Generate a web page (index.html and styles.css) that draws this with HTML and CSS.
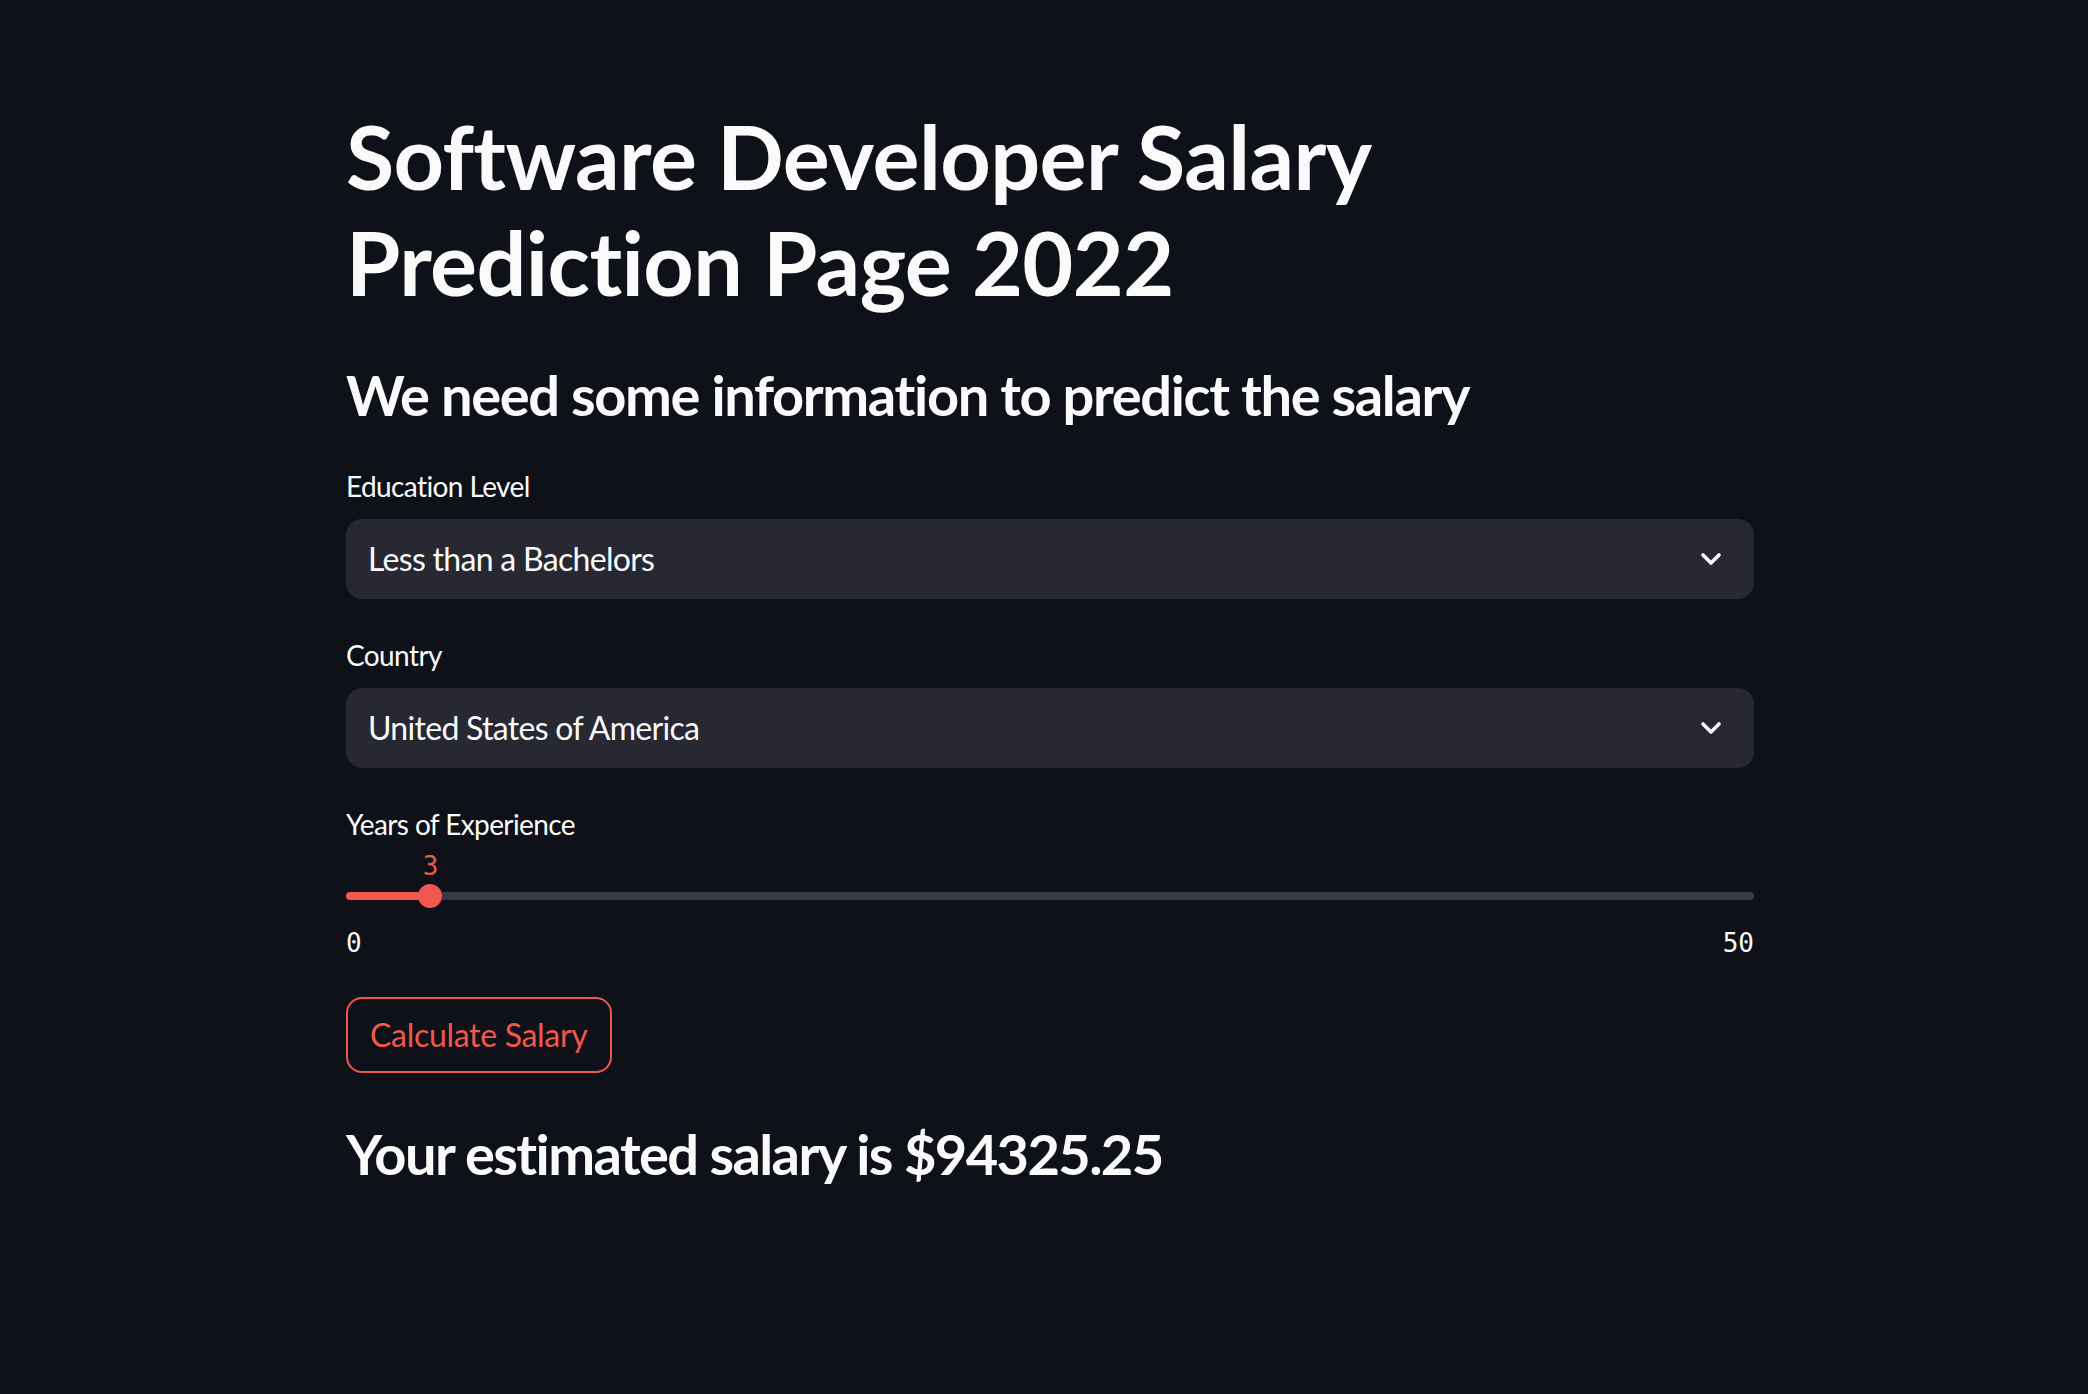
FILE: index.html
```html
<!DOCTYPE html>
<html lang="en">
<head>
<meta charset="utf-8">
<title>Software Developer Salary Prediction</title>
<link rel="stylesheet" href="styles.css">
</head>
<body>
<main class="page">
  <div class="content">
    <h1 class="title">Software Developer Salary<br>Prediction Page 2022</h1>
    <h3 class="subheader">We need some information to predict the salary</h3>

    <div class="field">
      <label class="label">Education Level</label>
      <div class="select">
        <span class="select-value">Less than a Bachelors</span>
        <svg class="chevron" width="22" height="14" viewBox="0 0 22 14"><polyline points="3,3 11,11 19,3" fill="none" stroke="#fafafa" stroke-width="3.6" stroke-linecap="round" stroke-linejoin="round"/></svg>
      </div>
    </div>

    <div class="field">
      <label class="label">Country</label>
      <div class="select">
        <span class="select-value">United States of America</span>
        <svg class="chevron" width="22" height="14" viewBox="0 0 22 14"><polyline points="3,3 11,11 19,3" fill="none" stroke="#fafafa" stroke-width="3.6" stroke-linecap="round" stroke-linejoin="round"/></svg>
      </div>
    </div>

    <div class="field slider-field">
      <label class="label">Years of Experience</label>
      <div class="slider">
        <div class="track">
          <div class="fill" style="width: 6%"></div>
          <div class="thumb" style="left: 6%">
            <span class="thumb-value">3</span>
          </div>
        </div>
        <div class="minmax">
          <span>0</span>
          <span>50</span>
        </div>
      </div>
    </div>

    <button class="btn">Calculate Salary</button>

    <h3 class="result">Your estimated salary is $94325.25</h3>
  </div>
</main>
</body>
</html>
```

FILE: styles.css
```css
* { box-sizing: border-box; }

html, body {
  margin: 0;
  padding: 0;
  background: #0e1117;
  color: #fafafa;
  font-family: "Lato", "Noto Sans", sans-serif;
  font-variant-ligatures: none;
}

body { min-height: 1394px; }

.page {
  padding: 103px 0 0 346px;
}

.content {
  width: 1408px;
}

.title {
  margin: 0;
  font-size: 88px;
  line-height: 106px;
  font-weight: 700;
  letter-spacing: -0.6px;
}

.subheader {
  margin: 46px 0 0;
  font-size: 56px;
  line-height: 68px;
  font-weight: 700;
  letter-spacing: -1.35px;
}

.field {
  margin-top: 39px;
}

.field + .field {
  margin-top: 38px;
}

.label {
  display: block;
  font-size: 28px;
  line-height: 36px;
  margin-bottom: 15px;
  letter-spacing: -0.6px;
}

.select {
  height: 80px;
  background: #272832;
  border-radius: 16px;
  display: flex;
  align-items: center;
  justify-content: space-between;
  padding: 0 32px 0 22px;
}

.select-value {
  font-size: 32px;
  line-height: 40px;
  letter-spacing: -0.7px;
}

.chevron { display: block; }

.slider {
  padding-top: 35px;
}

.track {
  position: relative;
  height: 8px;
  border-radius: 4px;
  background: #393b44;
}

.fill {
  height: 100%;
  border-radius: 4px;
  background: #f0574f;
}

.thumb {
  position: absolute;
  top: 50%;
  width: 24px;
  height: 24px;
  margin: -12px 0 0 -12px;
  border-radius: 50%;
  background: #f0574f;
}

.thumb-value {
  position: absolute;
  left: 50%;
  bottom: 27px;
  transform: translateX(-50%);
  font-family: "DejaVu Sans Mono", "Liberation Mono", monospace;
  font-size: 26px;
  line-height: 30px;
  color: #f0574f;
}

.minmax {
  margin-top: 28px;
  display: flex;
  justify-content: space-between;
  font-family: "DejaVu Sans Mono", "Liberation Mono", monospace;
  font-size: 26px;
  line-height: 30px;
}

.btn {
  display: flex;
  align-items: center;
  margin-top: 39px;
  height: 76px;
  padding: 0 22px;
  background: #0e1117;
  border: 2px solid #f0574f;
  border-radius: 16px;
  color: #f0574f;
  font-family: "Lato", "Noto Sans", sans-serif;
  font-size: 32px;
  line-height: 40px;
  letter-spacing: -0.3px;
}

.result {
  margin: 47px 0 0;
  font-size: 56px;
  line-height: 68px;
  font-weight: 700;
  letter-spacing: -1.6px;
}
```
